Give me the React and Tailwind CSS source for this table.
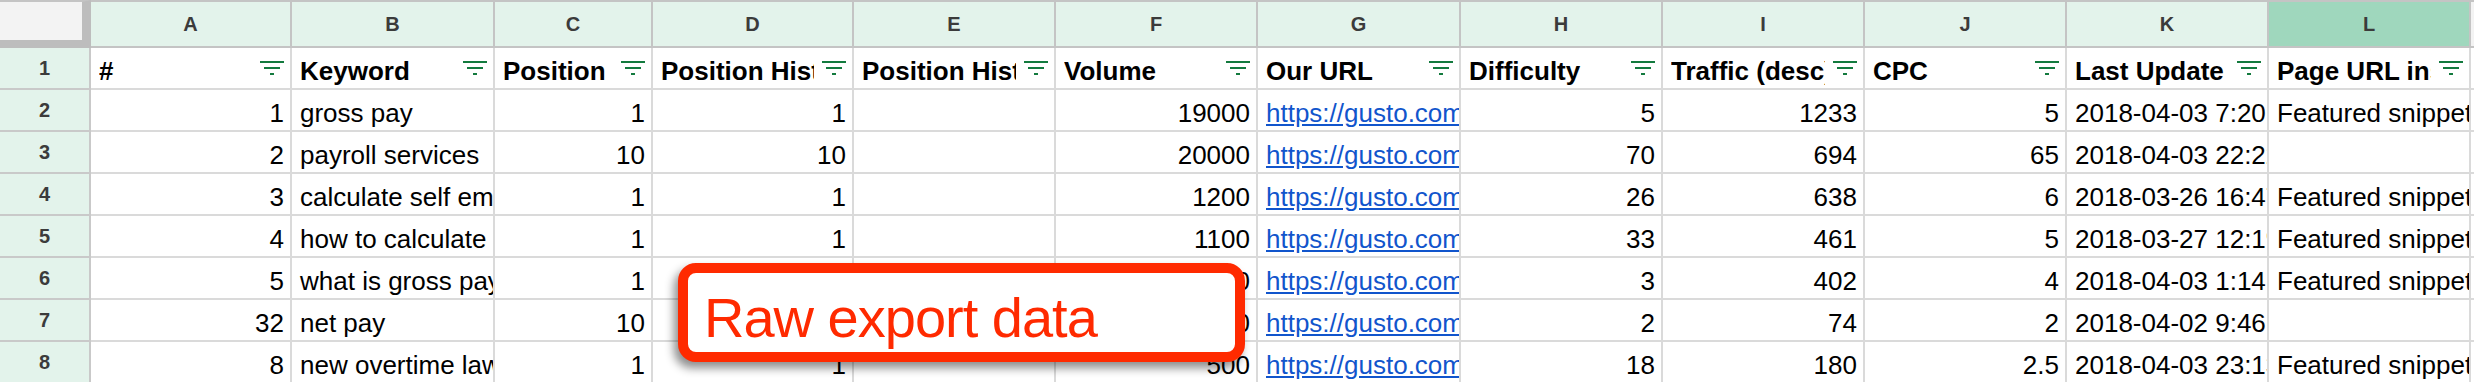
import React from 'react';

const FONT = { fontFamily: '"Liberation Sans", Arial, sans-serif' };

// column letter, header label, how the data is aligned
const columns = [
  { letter: 'A', label: '#', align: 'right' },
  { letter: 'B', label: 'Keyword', align: 'left' },
  { letter: 'C', label: 'Position', align: 'right' },
  { letter: 'D', label: 'Position History', align: 'right' },
  { letter: 'E', label: 'Position History Date', align: 'left' },
  { letter: 'F', label: 'Volume', align: 'right' },
  { letter: 'G', label: 'Our URL', align: 'link' },
  { letter: 'H', label: 'Difficulty', align: 'right' },
  { letter: 'I', label: 'Traffic (desc)', align: 'right' },
  { letter: 'J', label: 'CPC', align: 'right' },
  { letter: 'K', label: 'Last Update', align: 'left' },
  { letter: 'L', label: 'Page URL inside SERP Feature', align: 'left', selected: true },
];

const url = 'https://gusto.com/framework/payroll/gross-pay';

const rows = [
  ['1', 'gross pay', '1', '1', '', '19000', url, '5', '1233', '5', '2018-04-03 7:20:14', 'Featured snippet'],
  ['2', 'payroll services', '10', '10', '', '20000', url, '70', '694', '65', '2018-04-03 22:22:41', ''],
  ['3', 'calculate self employment tax', '1', '1', '', '1200', url, '26', '638', '6', '2018-03-26 16:47:09', 'Featured snippet'],
  ['4', 'how to calculate gross pay', '1', '1', '', '1100', url, '33', '461', '5', '2018-03-27 12:19:55', 'Featured snippet'],
  ['5', 'what is gross pay', '1', '1', '', '1000', url, '3', '402', '4', '2018-04-03 1:14:32', 'Featured snippet'],
  ['32', 'net pay', '10', '10', '', '900', url, '2', '74', '2', '2018-04-02 9:46:18', ''],
  ['8', 'new overtime laws', '1', '1', '', '500', url, '18', '180', '2.5', '2018-04-03 23:13:02', 'Featured snippet'],
];

const GRID =
  'grid grid-cols-[91px_201px_203px_158px_201px_202px_202px_203px_202px_202px_202px_202px_202px_1fr]';

function FilterIcon() {
  return (
    <svg width="24" height="14" viewBox="0 0 24 14" className="shrink-0 mb-[11px]">
      <rect x="0" y="0" width="24" height="2" fill="#137a3e" />
      <rect x="4" y="6" width="16" height="2" fill="#137a3e" />
      <rect x="10" y="12" width="4" height="2.4" fill="#137a3e" />
    </svg>
  );
}

function RowHeader({ n }) {
  return (
    <div className="h-[42px] bg-[#e3f3eb] border-r-2 border-b-2 border-[#c9c9c9] flex items-center justify-center text-[20px] font-bold text-[#3b3b3b]">
      {n}
    </div>
  );
}

function Cell({ value, align }) {
  if (align === 'right') {
    return (
      <div className="h-[42px] border-r-2 border-b-2 border-[#dadada] pl-[8px] pr-[6px] pb-[2px] flex items-end justify-end overflow-hidden whitespace-nowrap">
        <span className="leading-[30px]">{value}</span>
      </div>
    );
  }
  // text runs to the grid line and is clipped there
  return (
    <div className="h-[42px] border-r-2 border-b-2 border-[#dadada] pl-[8px] pb-[2px] flex items-end overflow-hidden whitespace-nowrap">
      {align === 'link' ? (
        <span className="leading-[30px] text-[#1155cc] underline">{value}</span>
      ) : (
        <span className="leading-[30px]">{value}</span>
      )}
    </div>
  );
}

export default function App() {
  return (
    <div className="relative w-[2474px] h-[382px] overflow-hidden bg-white text-[26px] text-black" style={FONT}>
      {/* column letters */}
      <div className={GRID}>
        <div className="h-[48px] bg-[#f3f3f3] border-t-2 border-[#c4c4c4] border-r-[9px] border-b-[8px] border-r-[#bdbdbd] border-b-[#bdbdbd]" />
        {columns.map((col) => (
          <div
            key={col.letter}
            className={
              'h-[48px] border-t-2 border-r-2 border-b-2 border-[#c4c4c4] flex items-center justify-center text-[20px] font-bold text-[#3b3b3b] ' +
              (col.selected ? 'bg-[#9fd7bd]' : 'bg-[#e3f3eb]')
            }
          >
            {col.letter}
          </div>
        ))}
        <div className="h-[48px] border-t-2 border-b-2 border-[#c4c4c4] bg-[#f3f3f3]" />
      </div>

      {/* header row with filters */}
      <div className={GRID}>
        <RowHeader n={1} />
        {columns.map((col) => (
          <div
            key={col.letter}
            className="h-[42px] border-r-2 border-b-2 border-[#dadada] pl-[8px] pr-[6px] pb-[2px] flex items-end gap-[8px] whitespace-nowrap"
          >
            <span className="flex-1 overflow-hidden leading-[30px] font-bold">{col.label}</span>
            <FilterIcon />
          </div>
        ))}
        <div className="h-[42px] border-b-2 border-[#dadada]" />
      </div>

      {rows.map((row, i) => (
        <div key={i} className={GRID}>
          <RowHeader n={i + 2} />
          {row.map((value, j) => (
            <Cell key={j} value={value} align={columns[j].align} />
          ))}
          <div className="h-[42px] border-b-2 border-[#dadada]" />
        </div>
      ))}

      {/* annotation callout */}
      <div className="absolute left-[678px] top-[263px] w-[567px] h-[99px] rounded-[18px] border-[10px] border-[#ff2a00] bg-white shadow-[-4px_6px_10px_rgba(0,0,0,0.45)] pl-[16px] pt-[3px]">
        <span className="text-[56px] leading-normal text-[#ff2a00] tracking-[-1px]">Raw export data</span>
      </div>
    </div>
  );
}
